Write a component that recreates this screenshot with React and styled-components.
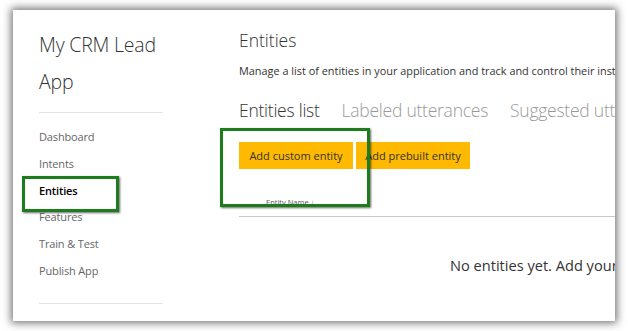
import React from "react";
import styled, { createGlobalStyle } from "styled-components";

const Global = createGlobalStyle`
  html, body { margin: 0; padding: 0; background: #fff; }
  body { font-family: "Open Sans", "Noto Sans", sans-serif; color: #333; }
  * { box-sizing: border-box; }
`;

const Page = styled.div`
  width: 628px;
  height: 331px;
  padding: 10px 13px 10px 13px;
  background: #fff;
`;

const Panel = styled.div`
  position: relative;
  width: 602px;
  height: 311px;
  background: #fff;
  box-shadow: 0 0 8px 2px rgba(0, 0, 0, 0.55);
  display: flex;
  overflow: hidden;
`;

const Sidebar = styled.aside`
  width: 226px;
  flex: none;
  padding: 16px 0 0 26px;
`;

const SideInner = styled.div`
  width: 124px;
`;

const AppTitle = styled.h1`
  margin: 0;
  font-weight: 300;
  font-size: 19.5px;
  line-height: 37px;
  color: #333;
  letter-spacing: -0.2px;
`;

const Rule = styled.hr`
  border: 0;
  height: 1px;
  background: #e3e3e3;
  margin: ${(p) => p.$m || "0"};
`;

const Nav = styled.nav`
  display: flex;
  flex-direction: column;
  padding: 11px 0 18px;
`;

const NavItem = styled.a`
  font-size: 11px;
  line-height: 26.8px;
  letter-spacing: -0.15px;
  color: ${(p) => (p.$active ? "#000" : "#666")};
  font-weight: ${(p) => (p.$active ? 600 : 400)};
  text-decoration: none;
  white-space: nowrap;
`;

const Main = styled.main`
  flex: 1;
  min-width: 0;
  padding: 18px 0 0 0;
  overflow: hidden;
`;

const Heading = styled.h2`
  margin: 0;
  font-weight: 300;
  font-size: 17.5px;
  line-height: 24px;
  color: #333;
`;

const Desc = styled.p`
  margin: 12px 0 0;
  font-size: 10.9px;
  line-height: 14px;
  color: #333;
  white-space: nowrap;
`;

const Tabs = styled.div`
  display: flex;
  gap: 22px;
  margin-top: 19px;
  white-space: nowrap;
`;

const Tab = styled.span`
  font-size: 17.5px;
  font-weight: 300;
  letter-spacing: -0.25px;
  line-height: 26px;
  color: ${(p) => (p.$active ? "#333" : "#999")};
`;

const Buttons = styled.div`
  display: flex;
  gap: 3px;
  margin-top: 19px;
`;

const Button = styled.button`
  height: 27px;
  padding: 0;
  width: ${(p) => p.$w}px;
  border: 0;
  background: #ffb900;
  color: #333;
  font-family: inherit;
  font-size: 11px;
`;

const ColHeader = styled.div`
  margin-top: 28px;
  padding-left: 27px;
  font-size: 7.5px;
  line-height: 10px;
  color: #555;
`;

const TableRule = styled.div`
  height: 1px;
  background: #c8c8c8;
  margin-top: 9px;
`;

const Empty = styled.div`
  margin-top: 37px;
  padding-left: 211px;
  font-size: 14.6px;
  font-weight: 400;
  line-height: 22px;
  color: #333;
  white-space: nowrap;
`;

const Highlight = styled.div`
  position: absolute;
  left: ${(p) => p.$x}px;
  top: ${(p) => p.$y}px;
  width: ${(p) => p.$w}px;
  height: ${(p) => p.$h}px;
  border: 3px solid #1e7b1e;
  box-shadow: 1px 1px 2px rgba(0, 0, 0, 0.6), inset 0 0 1px rgba(0,0,0,0.3);
  pointer-events: none;
`;

export default function App() {
  const nav = ["Dashboard", "Intents", "Entities", "Features", "Train & Test", "Publish App"];
  return (
    <>
      <Global />
      <Page>
        <Panel>
          <Sidebar>
            <SideInner>
              <AppTitle>
                My CRM Lead
                <br />
                App
              </AppTitle>
              <Rule $m="12px 0 0" />
              <Nav>
                {nav.map((n) => (
                  <NavItem key={n} $active={n === "Entities"}>
                    {n}
                  </NavItem>
                ))}
              </Nav>
              <Rule $m="0" />
            </SideInner>
          </Sidebar>
          <Main>
            <Heading>Entities</Heading>
            <Desc>
              Manage a list of entities in your application and track and control their instances
            </Desc>
            <Tabs>
              <Tab $active>Entities list</Tab>
              <Tab>Labeled utterances</Tab>
              <Tab>Suggested utterances</Tab>
            </Tabs>
            <Buttons>
              <Button $w={114}>Add custom entity</Button>
              <Button $w={114}>Add prebuilt entity</Button>
            </Buttons>
            <ColHeader>Entity Name ↓</ColHeader>
            <TableRule />
            <Empty>No entities yet. Add your first entity</Empty>
          </Main>
          <Highlight $x={9} $y={166} $w={97} $h={36} />
          <Highlight $x={207} $y={118} $w={150} $h={79} />
        </Panel>
      </Page>
    </>
  );
}
